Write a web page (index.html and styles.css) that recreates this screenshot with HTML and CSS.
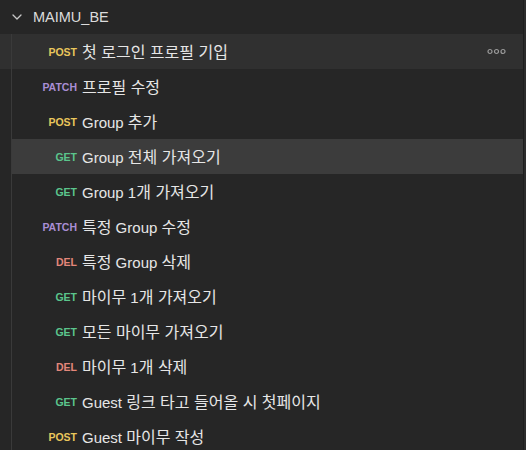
FILE: index.html
```html
<!DOCTYPE html>
<html lang="ko">
<head>
<meta charset="utf-8">
<title>MAIMU_BE</title>
<link rel="stylesheet" href="styles.css">
</head>
<body>
<div class="pane">
  <div class="tree">
    <div class="header">
      <svg class="chevron" width="10" height="6" viewBox="0 0 10 6"><path d="M1 1 L5 5 L9 1" fill="none" stroke="#c8c8c8" stroke-width="1.3" stroke-linecap="round" stroke-linejoin="round"/></svg>
      <span class="title">MAIMU_BE</span>
    </div>
    <div class="row hover">
      <div class="guide"></div>
      <div class="item"><span class="method post">POST</span><span class="name"><span class="ko">첫 로그인 프로필 기입</span></span>
        <svg class="more" width="20" height="7" viewBox="0 0 20 7"><circle cx="3" cy="3.5" r="2" fill="none" stroke="#9a9a9a" stroke-width="1.2"/><circle cx="9.5" cy="3.5" r="2" fill="none" stroke="#9a9a9a" stroke-width="1.2"/><circle cx="16" cy="3.5" r="2" fill="none" stroke="#9a9a9a" stroke-width="1.2"/></svg>
      </div>
    </div>
    <div class="row"><div class="guide"></div><div class="item"><span class="method patch">PATCH</span><span class="name"><span class="ko">프로필 수정</span></span></div></div>
    <div class="row"><div class="guide"></div><div class="item"><span class="method post">POST</span><span class="name">Group <span class="ko">추가</span></span></div></div>
    <div class="row"><div class="guide"></div><div class="item selected"><span class="method get">GET</span><span class="name">Group <span class="ko">전체 가져오기</span></span></div></div>
    <div class="row"><div class="guide"></div><div class="item"><span class="method get">GET</span><span class="name">Group 1<span class="ko">개 가져오기</span></span></div></div>
    <div class="row"><div class="guide"></div><div class="item"><span class="method patch">PATCH</span><span class="name"><span class="ko">특정</span> Group <span class="ko">수정</span></span></div></div>
    <div class="row"><div class="guide"></div><div class="item"><span class="method del">DEL</span><span class="name"><span class="ko">특정</span> Group <span class="ko">삭제</span></span></div></div>
    <div class="row"><div class="guide"></div><div class="item"><span class="method get">GET</span><span class="name"><span class="ko">마이무</span> 1<span class="ko">개 가져오기</span></span></div></div>
    <div class="row"><div class="guide"></div><div class="item"><span class="method get">GET</span><span class="name"><span class="ko">모든 마이무 가져오기</span></span></div></div>
    <div class="row"><div class="guide"></div><div class="item"><span class="method del">DEL</span><span class="name"><span class="ko">마이무</span> 1<span class="ko">개 삭제</span></span></div></div>
    <div class="row"><div class="guide"></div><div class="item"><span class="method get">GET</span><span class="name">Guest <span class="ko">링크 타고 들어올 시 첫페이지</span></span></div></div>
    <div class="row"><div class="guide"></div><div class="item"><span class="method post">POST</span><span class="name">Guest <span class="ko">마이무 작성</span></span></div></div>
  </div>
  <div class="edge"></div>
</div>
</body>
</html>
```
FILE: styles.css
```css
html, body {
  margin: 0;
  padding: 0;
  background: #262626;
  height: 100%;
  overflow: hidden;
}
body {
  font-family: "Liberation Sans", "Noto Sans CJK KR", sans-serif;
  color: #e4e4e4;
}
.pane {
  display: flex;
  height: 450px;
  overflow: hidden;
}
.tree {
  flex: 1;
  display: flex;
  flex-direction: column;
}
.edge {
  width: 3px;
  flex-shrink: 0;
  border-left: 1px solid #1e1e1e;
  box-sizing: border-box;
  background: #2c2c2c;
}
.header {
  height: 34px;
  flex-shrink: 0;
  display: flex;
  align-items: center;
  padding-left: 12px;
}
.chevron {
  display: block;
  margin-right: 11px;
}
.title {
  font-size: 14.5px;
  color: #dcdcdc;
}
.row {
  height: 35px;
  display: flex;
  flex-shrink: 0;
}
.row.hover {
  background: #303030;
}
.guide {
  width: 11px;
  border-right: 1px solid #3a3a3a;
}
.item {
  flex: 1;
  display: flex;
  align-items: center;
  position: relative;
}
.item.selected {
  background: #3c3c3c;
}
.method {
  width: 65px;
  text-align: right;
  font-size: 10.5px;
  font-weight: bold;
  margin-right: 5px;
  padding-top: 1px;
}
.post { color: #e9c75c; }
.patch { color: #a98ed4; }
.get { color: #5bc58c; }
.del { color: #e3877a; }
.name {
  font-size: 15px;
  line-height: 20px;
  color: #e6e6e6;
}
.ko {
  font-family: "Noto Sans CJK KR", sans-serif;
  font-size: 16px;
  line-height: 20px;
}
.more {
  position: absolute;
  right: 16px;
  top: 14px;
}
```
